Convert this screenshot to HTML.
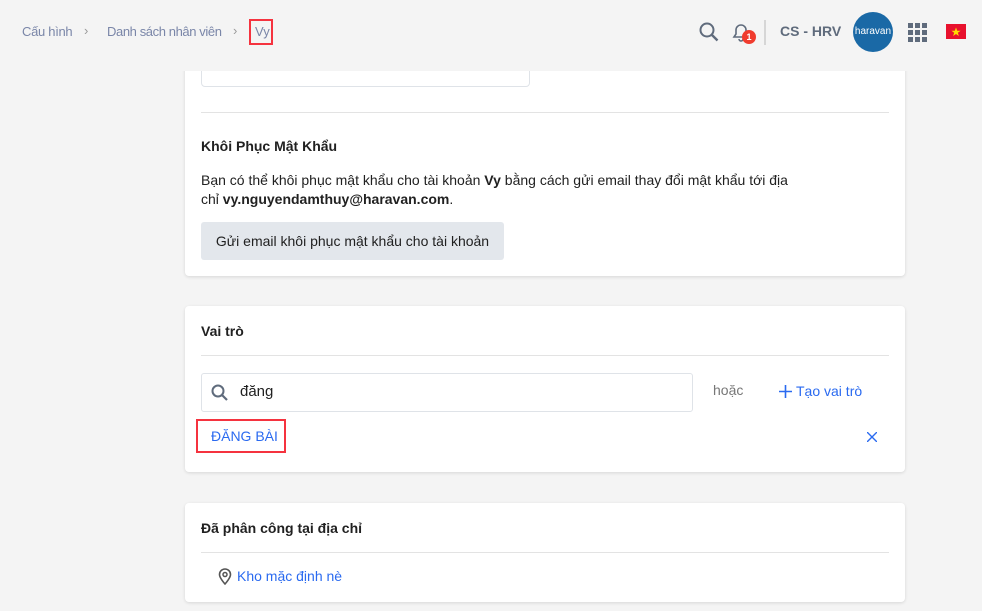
<!DOCTYPE html>
<html><head><meta charset="utf-8"><style>
*{box-sizing:border-box;margin:0;padding:0}
body{width:982px;height:611px;overflow:hidden;background:#f4f4f4;font-family:"Liberation Sans",sans-serif;position:relative;font-size:14px;color:#212121}
.abs{position:absolute}
.card{position:absolute;left:185px;width:720px;background:#fff;border-radius:4px;box-shadow:0 1px 3px rgba(0,0,0,.12)}
.hr{position:absolute;left:16px;right:16px;height:1px;background:#e3e3e3}
.b{font-weight:bold}
.blue{color:#2a6af0}
</style></head><body>
<div class="card" style="top:40px;height:236px">
  <div class="abs" style="left:16px;top:0;width:329px;height:47px;border:1px solid #dfe3e8;border-radius:4px"></div>
  <div class="hr" style="top:72px"></div>
  <div class="abs b" style="left:16px;top:98px;font-size:14px">Khôi Phục Mật Khẩu</div>
  <div class="abs" style="left:16px;top:131px;line-height:19px;width:600px">Bạn có thể khôi phục mật khẩu cho tài khoản <b>Vy</b> bằng cách gửi email thay đổi mật khẩu tới địa chỉ <b>vy.nguyendamthuy@haravan.com</b>.</div>
  <div class="abs" style="left:16px;top:182px;width:303px;height:38px;background:#e3e7ec;border-radius:3px;line-height:38px;text-align:center">Gửi email khôi phục mật khẩu cho tài khoản</div>
</div>
<div class="abs" style="left:0;top:0;width:982px;height:71px;background:#f4f4f4"></div>
<div class="abs" style="left:22px;top:24px;color:#7a86a8;font-size:13px;letter-spacing:-0.3px">Cấu hình</div>
<div class="abs" style="left:84px;top:23px;color:#999;font-size:13px">›</div>
<div class="abs" style="left:107px;top:24px;color:#7a86a8;font-size:13px;letter-spacing:-0.4px">Danh sách nhân viên</div>
<div class="abs" style="left:233px;top:23px;color:#999;font-size:13px">›</div>
<div class="abs" style="left:249px;top:19px;width:24px;height:26px;border:2px solid #f5333f"></div>
<div class="abs" style="left:255px;top:24px;color:#7a86a8;font-size:13px">Vy</div>
<svg class="abs" style="left:698px;top:21px" width="22" height="22" viewBox="0 0 22 22"><circle cx="9" cy="9" r="6.5" fill="none" stroke="#5f6b7c" stroke-width="2"/><path d="M14 14l5.5 5.5" stroke="#5f6b7c" stroke-width="2.4"/></svg>
<svg class="abs" style="left:731px;top:21px" width="20" height="22" viewBox="0 0 20 22"><path d="M3 16h14l-2-3V9a5 5 0 0 0-10 0v4z" fill="none" stroke="#5f6b7c" stroke-width="1.6"/><path d="M8 18a2 2 0 0 0 4 0" fill="none" stroke="#5f6b7c" stroke-width="1.5"/></svg>
<div class="abs" style="left:742px;top:30px;width:14px;height:14px;border-radius:50%;background:#f03c2e;color:#fff;font-size:9px;font-weight:bold;text-align:center;line-height:14px">1</div>
<div class="abs" style="left:764px;top:20px;width:2px;height:25px;background:#d6d6d6"></div>
<div class="abs b" style="left:780px;top:23px;font-size:14px;color:#5f6b7c">CS - HRV</div>
<div class="abs" style="left:853px;top:12px;width:40px;height:40px;border-radius:50%;background:#1a69a6;color:#fff;font-size:10px;text-align:center;line-height:40px;overflow:hidden">haravan</div>
<svg class="abs" style="left:908px;top:23px" width="19" height="19" viewBox="0 0 19 19" fill="#5f6b7c"><rect x="0" y="0" width="5" height="5"/><rect x="7" y="0" width="5" height="5"/><rect x="14" y="0" width="5" height="5"/><rect x="0" y="7" width="5" height="5"/><rect x="7" y="7" width="5" height="5"/><rect x="14" y="7" width="5" height="5"/><rect x="0" y="14" width="5" height="5"/><rect x="7" y="14" width="5" height="5"/><rect x="14" y="14" width="5" height="5"/></svg>
<svg class="abs" style="left:946px;top:24px" width="20" height="15" viewBox="0 0 20 15"><rect width="20" height="15" fill="#e8112d"/><polygon points="10,3.5 11.2,6.8 14.6,6.8 11.8,8.8 12.9,12 10,10 7.1,12 8.2,8.8 5.4,6.8 8.8,6.8" fill="#ffde00"/></svg>

<div class="card" style="top:306px;height:166px">
  <div class="abs b" style="left:16px;top:17px">Vai trò</div>
  <div class="hr" style="top:49px"></div>
  <div class="abs" style="left:16px;top:67px;width:492px;height:39px;border:1px solid #dfe3e8;border-radius:3px"></div>
  <svg class="abs" style="left:25px;top:77px" width="20" height="20" viewBox="0 0 20 20"><circle cx="8" cy="8" r="5.5" fill="none" stroke="#5f6b7c" stroke-width="2"/><path d="M12 12l5 5" stroke="#5f6b7c" stroke-width="2.2"/></svg>
  <div class="abs" style="left:55px;top:77px;font-size:15px">đăng</div>
  <div class="abs" style="left:528px;top:76px;color:#777;font-size:14px">hoặc</div>
  <svg class="abs" style="left:594px;top:79px" width="13" height="13" viewBox="0 0 13 13"><path d="M6.5 0v13M0 6.5h13" stroke="#2a6af0" stroke-width="1.6"/></svg>
  <div class="abs blue" style="left:611px;top:77px;font-size:14px">Tạo vai trò</div>
  <div class="abs" style="left:11px;top:113px;width:90px;height:34px;border:2px solid #f5333f"></div>
  <div class="abs blue" style="left:26px;top:122px;font-size:14px">ĐĂNG BÀI</div>
  <svg class="abs" style="left:682px;top:126px" width="10" height="10" viewBox="0 0 10 10"><path d="M0 0l10 10M10 0L0 10" stroke="#2a6af0" stroke-width="1.4"/></svg>
</div>

<div class="card" style="top:503px;height:99px">
  <div class="abs b" style="left:16px;top:17px">Đã phân công tại địa chỉ</div>
  <div class="hr" style="top:49px"></div>
  <svg class="abs" style="left:33px;top:65px" width="14" height="17" viewBox="0 0 14 17"><path d="M7 16s-5.5-6-5.5-9.5a5.5 5.5 0 0 1 11 0C12.5 10 7 16 7 16z" fill="none" stroke="#555" stroke-width="1.6"/><circle cx="7" cy="6.5" r="2" fill="none" stroke="#555" stroke-width="1.5"/></svg>
  <div class="abs blue" style="left:52px;top:65px;font-size:14px">Kho mặc định nè</div>
</div>
</body></html>
